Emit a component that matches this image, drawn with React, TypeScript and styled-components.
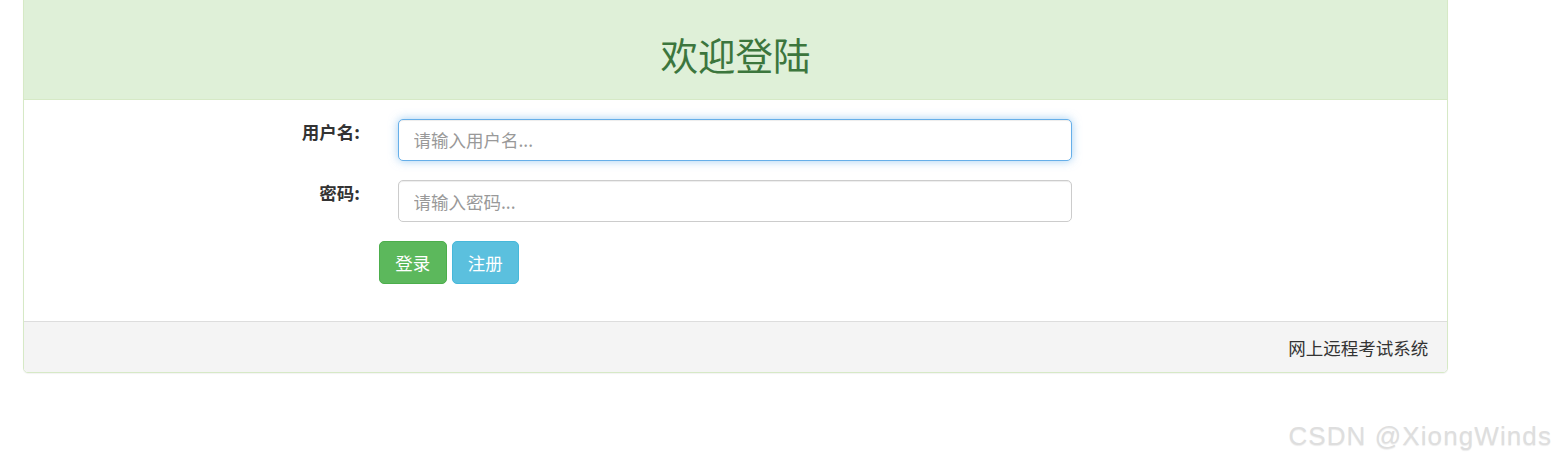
import React from "react";
import styled, { createGlobalStyle } from "styled-components";

const GlobalStyle = createGlobalStyle`
  html, body {
    margin: 0;
    padding: 0;
    background: #fff;
  }
  body {
    font-family: "Liberation Sans", "Noto Sans CJK SC", sans-serif;
    font-size: 17.5px;
    line-height: 1.42857;
    color: #333;
  }
  * { box-sizing: border-box; }
`;

const Page = styled.div`
  position: relative;
  width: 1557px;
  height: 468px;
  overflow: hidden;
`;

const Panel = styled.div`
  width: 1425px;
  margin: -6px 0 0 23px;
  border: 1px solid #d6e9c6;
  border-radius: 5px;
  background: #fff;
  box-shadow: 0 1px 1px rgba(0, 0, 0, 0.05);
`;

const Heading = styled.div`
  padding: 12.5px 18.75px;
  background: #dff0d8;
  border-bottom: 1px solid #d6e9c6;
  border-radius: 4px 4px 0 0;
`;

const Title = styled.h2`
  margin: 25px 0 12.5px;
  font-size: 37.5px;
  line-height: 1.1;
  font-weight: 400;
  text-align: center;
  color: #3c763d;
  font-family: "Noto Sans CJK SC", sans-serif;
`;

const Body = styled.div`
  padding: 18.75px;
`;

const Form = styled.form`
  display: flex;
  flex-direction: column;
  gap: 18.75px;
  margin: 0 0 18.75px;
`;

const Row = styled.div`
  display: grid;
  grid-template-columns: 317.25px 674.5px;
  column-gap: 37.5px;
  align-items: start;
`;

const Label = styled.label`
  text-align: right;
  font-weight: 700;
  color: #333;
  line-height: 25px;
  font-family: "Noto Sans CJK SC", sans-serif;
  font-size: 17.5px;
`;

const Input = styled.input<{ $focused?: boolean }>`
  display: block;
  width: 100%;
  height: 42.5px;
  padding: 7.5px 15px;
  font-size: 17.5px;
  font-family: "Noto Sans CJK SC", sans-serif;
  color: #555;
  background: #fff;
  border: 1px solid ${(p) => (p.$focused ? "#66afe9" : "#ccc")};
  border-radius: 5px;
  outline: none;
  box-shadow: ${(p) =>
    p.$focused
      ? "inset 0 1px 1px rgba(0,0,0,.075), 0 0 10px rgba(102,175,233,.6)"
      : "inset 0 1px 1px rgba(0,0,0,.075)"};
  &::placeholder {
    color: #999;
  }
`;

const ButtonRow = styled.div`
  display: flex;
  gap: 5px;
  margin-left: 336.25px;
`;

const Button = styled.button<{ $variant: "success" | "info" }>`
  height: 42.5px;
  padding: 7.5px 15.25px;
  font-size: 17.5px;
  line-height: 25px;
  font-family: "Noto Sans CJK SC", sans-serif;
  color: #fff;
  border-radius: 5px;
  cursor: pointer;
  background: ${(p) => (p.$variant === "success" ? "#5cb85c" : "#5bc0de")};
  border: 1px solid ${(p) => (p.$variant === "success" ? "#4cae4c" : "#46b8da")};
`;

const Footer = styled.div`
  padding: 12.5px 18.75px;
  background: #f4f4f4;
  border-top: 1px solid #ddd;
  border-radius: 0 0 4px 4px;
  text-align: right;
  font-family: "Noto Sans CJK SC", sans-serif;
  font-size: 17.5px;
  line-height: 25px;
  color: #333;
`;

const Watermark = styled.div`
  position: absolute;
  right: 5px;
  top: 421px;
  font-family: "Liberation Sans", sans-serif;
  font-size: 26px;
  line-height: 30px;
  letter-spacing: 1.1px;
  color: #dedede;
  text-shadow: 0 1px 1px rgba(0, 0, 0, 0.08);
  pointer-events: none;
`;

export default function App() {
  return (
    <Page>
      <GlobalStyle />
      <Panel>
        <Heading>
          <Title>欢迎登陆</Title>
        </Heading>
        <Body>
          <Form onSubmit={(e) => e.preventDefault()}>
            <Row>
              <Label htmlFor="username">用户名:</Label>
              <Input id="username" $focused placeholder="请输入用户名..." />
            </Row>
            <Row>
              <Label htmlFor="password">密码:</Label>
              <Input id="password" type="password" placeholder="请输入密码..." />
            </Row>
            <ButtonRow>
              <Button type="submit" $variant="success">登录</Button>
              <Button type="button" $variant="info">注册</Button>
            </ButtonRow>
          </Form>
        </Body>
        <Footer>网上远程考试系统</Footer>
      </Panel>
      <Watermark>CSDN @XiongWinds</Watermark>
    </Page>
  );
}
